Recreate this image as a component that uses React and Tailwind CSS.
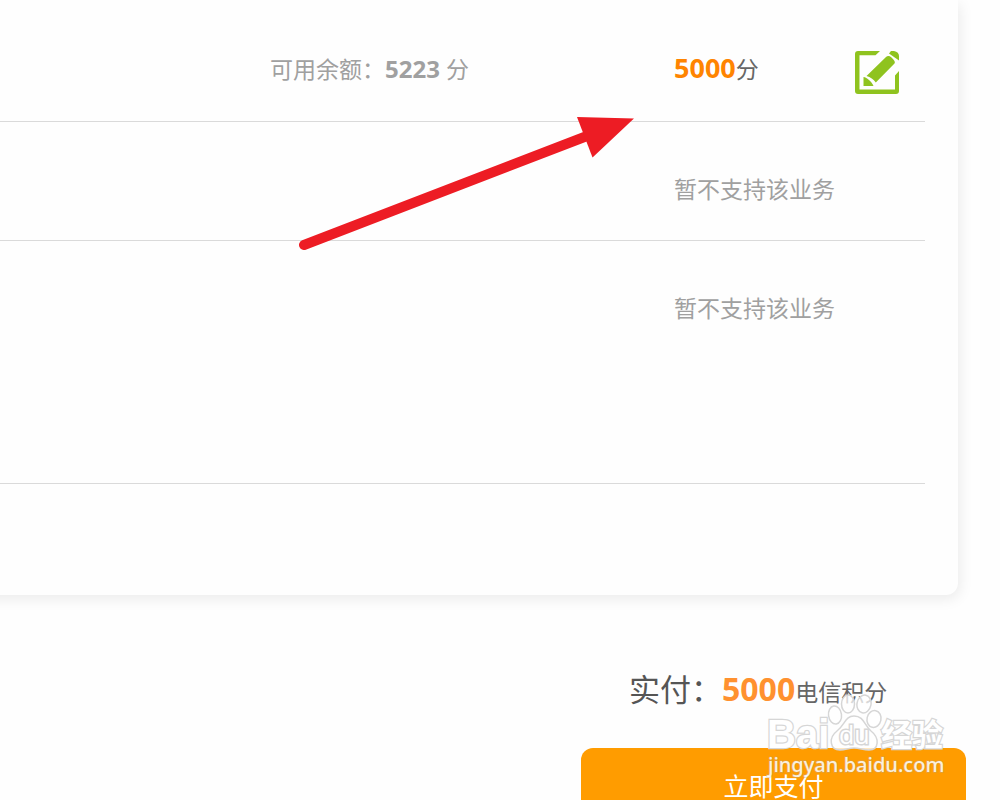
import React from 'react';

const columns = 'grid grid-cols-[1fr_404px_181px_70px] items-center border-[#dadada]';

function EditIcon() {
  return (
    <svg viewBox="0 0 44 43" className="h-[43px] w-11" fill="#8fc31f" aria-hidden="true">
      <path d="M3 0H25L20.500 4.300H4.500V38.500H40V24.500L44 20V40a3 3 0 0 1-3 3H3a3 3 0 0 1-3-3V3a3 3 0 0 1 3-3Z" />
      <path d="M31 6Q33.500 4 36.500 6.500Q41 10.500 39.500 12.500L20.800 31.500C18.500 28.500 15.500 26 11.500 25Z" />
      <path d="M36 0H39Q44 1 44 5V9.500L34 2.500Z" />
      <path d="M8.500 26C12 26.500 17 31 18.500 35H8.500Z" />
    </svg>
  );
}

function Arrow() {
  return (
    <svg
      viewBox="0 0 336 134"
      className="pointer-events-none absolute top-[116px] left-[299px] h-[134px] w-[336px]"
      aria-hidden="true"
    >
      <path d="M5 129 288 20" stroke="#ed1c24" strokeWidth="10" strokeLinecap="round" />
      <path d="M278 1 335 2.500 293.500 41.500Z" fill="#ed1c24" />
    </svg>
  );
}

function Watermark() {
  return (
    <svg
      viewBox="0 0 184 86"
      className="pointer-events-none absolute top-[99px] right-[50px] h-[86px] w-[184px]"
      role="img"
      aria-label="Baidu 经验 jingyan.baidu.com"
    >
      <g fill="#fff" fillOpacity=".75" stroke="#d6d6d6" strokeWidth="1.500">
        <text x="1" y="54" fontSize="40" fontWeight="700" fontFamily='"Liberation Sans", sans-serif' fillOpacity="1" paintOrder="stroke" strokeWidth="2.500">
          Bai
        </text>
        <ellipse cx="69" cy="21" rx="6.500" ry="9" transform="rotate(-8 69 21)" />
        <ellipse cx="82" cy="10" rx="6.500" ry="9" />
        <ellipse cx="98" cy="10" rx="7" ry="9" transform="rotate(12 98 10)" />
        <ellipse cx="108" cy="25" rx="7" ry="8.500" transform="rotate(12 108 25)" />
        <path d="M88 22C79 22 79 31 71 37C62 44 64 56 74 56C80 56 82 54 88 54C94 54 97 56 103 56C113 56 114 44 105 37C98 31 98 22 88 22Z" />
        <text x="73" y="50" fontSize="25" fontWeight="400" fontFamily='"Open Sans", sans-serif' fillOpacity="1" paintOrder="stroke" strokeWidth="3">
          du
        </text>
        <text x="115" y="52" fontSize="31" fontWeight="700" fontFamily='"Noto Sans CJK SC", sans-serif' fillOpacity="1" paintOrder="stroke" strokeWidth="2.500">
          经验
        </text>
      </g>
      <text x="2" y="78" fontSize="20" fontWeight="500" fill="#fff" fillOpacity=".85" stroke="#a8a8a8" strokeOpacity=".35" strokeWidth="1.500" paintOrder="stroke" fontFamily='"Noto Sans", sans-serif'>
        jingyan.baidu.com
      </text>
    </svg>
  );
}

export default function App() {
  return (
    <main className="relative h-screen overflow-hidden bg-[#fefefe] font-['Noto_Sans','Noto_Sans_CJK_SC',sans-serif] text-[23px] leading-8 font-normal text-[#a0a0a0]">
      <section className="mr-[42px] -ml-5 rounded-br-xl bg-[#fefefe] pr-[33px] shadow-[2px_4px_14px_rgba(0,0,0,0.08)]">
        <div className={`${columns} h-[122px] border-b pt-4`}>
          <p className="col-start-2 whitespace-nowrap">
            可用余额：<strong className="text-2xl leading-8 font-bold">5223</strong> 分
          </p>
          <p className="whitespace-nowrap text-[#666]">
            <strong className="text-[27px] leading-8 font-bold text-[#ff8400]">5000</strong>分
          </p>
          <button type="button" aria-label="编辑" className="w-11 pt-2">
            <EditIcon />
          </button>
        </div>
        <div className={`${columns} h-[119px] border-b pt-4`}>
          <p className="col-start-3 whitespace-nowrap">暂不支持该业务</p>
        </div>
        <div className={`${columns} h-[243px] items-start border-b pt-[51px]`}>
          <p className="col-start-3 whitespace-nowrap">暂不支持该业务</p>
        </div>
        <div className="h-[111px]" />
      </section>

      <section className="relative pt-[70px] pr-[34px]">
        <div className="ml-auto w-[385px]">
          <p className="pl-12 leading-12 whitespace-nowrap text-[#666]">
            <span className="text-[31px] text-[#555]">实付：</span>
            <strong className="text-[32px] font-bold text-[#ff912f]">5000</strong>电信积分
          </p>
          <button
            type="button"
            className="mt-8 h-[76px] w-full rounded-xl bg-[#ff9c00] text-[25px] text-white"
          >
            立即支付
          </button>
        </div>
        <Watermark />
      </section>
      <Arrow />
    </main>
  );
}
